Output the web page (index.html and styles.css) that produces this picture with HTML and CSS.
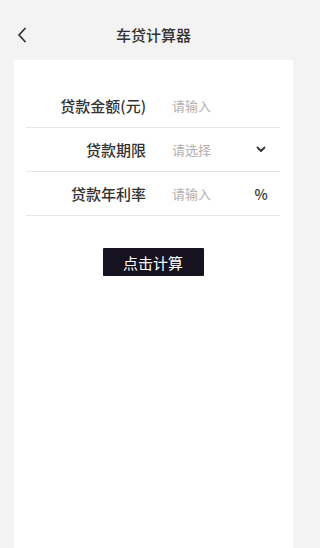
FILE: index.html
```html
<!DOCTYPE html>
<html lang="zh">
<head>
<meta charset="utf-8">
<meta name="viewport" content="width=307">
<title>车贷计算器</title>
<link rel="stylesheet" href="styles.css">
</head>
<body>
<div class="page">
  <header class="nav">
    <span class="back">
      <svg width="10" height="16" viewBox="0 0 10 16"><path d="M8 1.5 L2 8 L8 14.5" fill="none" stroke="#333" stroke-width="1.8" stroke-linecap="round" stroke-linejoin="round"/></svg>
    </span>
    <h1 class="title">车贷计算器</h1>
  </header>
  <main class="card">
    <div class="row">
      <span class="label">贷款金额(元)</span>
      <span class="value">请输入</span>
      <span class="suffix"></span>
    </div>
    <div class="row">
      <span class="label">贷款期限</span>
      <span class="value">请选择</span>
      <span class="suffix">
        <svg width="10" height="7" viewBox="0 0 10 7"><path d="M1.5 1.5 L5 5 L8.5 1.5" fill="none" stroke="#333" stroke-width="1.8" stroke-linecap="round" stroke-linejoin="round"/></svg>
      </span>
    </div>
    <div class="row">
      <span class="label">贷款年利率</span>
      <span class="value">请输入</span>
      <span class="suffix pct">%</span>
    </div>
    <div class="actions">
      <button class="btn">点击计算</button>
    </div>
  </main>
</div>
</body>
</html>
```
FILE: styles.css
```css
* { box-sizing: border-box; }
html { background: #f3f3f3; }
html, body { margin: 0; padding: 0; }
body {
  width: 307px;
  background: #f3f3f3;
  font-family: "Noto Sans CJK SC", "Noto Sans", sans-serif;
  color: #333;
}
.page {
  display: flex;
  flex-direction: column;
  height: 548px;
  overflow: hidden;
}
.nav {
  position: relative;
  height: 30px;
  margin-top: 20px;
  display: flex;
  align-items: center;
  justify-content: center;
}
.back {
  position: absolute;
  left: 17px;
  top: 7px;
  display: flex;
}
.title {
  margin: 0;
  font-size: 15px;
  font-weight: 500;
  color: #333;
  line-height: 30px;
}
.card {
  flex: 1;
  margin: 10px 14px 0;
  background: #fff;
  padding: 24px 13px 0 12px;
}
.row {
  height: 44px;
  display: flex;
  align-items: center;
  border-bottom: 1px solid #e6e6e6;
}
.label {
  width: 120px;
  text-align: right;
  font-size: 15px;
  font-weight: 500;
  color: #333;
}
.value {
  flex: 1;
  margin-left: 26px;
  font-size: 13px;
  color: #b0b0b0;
}
.suffix {
  width: 16px;
  margin-right: 11px;
  display: flex;
  justify-content: center;
  align-items: center;
}
.pct {
  font-size: 14px;
  font-weight: 500;
  color: #333;
}
.actions {
  display: flex;
  justify-content: center;
  margin-top: 32px;
}
.btn {
  width: 101px;
  height: 28px;
  border: none;
  border-radius: 1px;
  background: #16121f;
  color: #fff;
  font-family: "Noto Sans CJK SC", "Noto Sans", sans-serif;
  font-size: 15px;
  padding: 0;
}
```
